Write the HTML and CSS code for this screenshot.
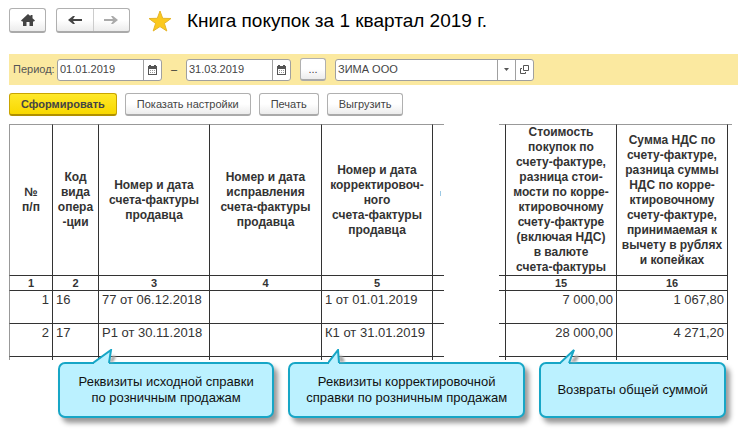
FILE: index.html
```html
<!DOCTYPE html>
<html lang="ru">
<head>
<meta charset="utf-8">
<title>Книга покупок</title>
<link rel="stylesheet" href="styles.css">
</head>
<body>
<header class="topbar">
  <button class="btn home" type="button" aria-label="Домой">
    <svg width="14" height="12" viewBox="0 0 14 12"><path fill="#444" d="M7 0 0 6.500 1 7.500h1V12h3.500V8h3v4H12V7.500h1l1-1-2.500-2.300V1H9.500v1.300z"/></svg>
  </button>
  <div class="nav">
    <button type="button" aria-label="Назад">
      <svg width="14" height="10" viewBox="0 0 14 10"><path fill="#444" d="M14 4H5l2-3H5L0 5l5 4h2L5 6h9z"/></svg>
    </button>
    <button type="button" aria-label="Вперёд">
      <svg width="14" height="10" viewBox="0 0 14 10"><path fill="#aaa" d="M0 4h9L7 1h2l5 4-5 4H7l2-3H0z"/></svg>
    </button>
  </div>
  <svg class="star" width="24" height="22" viewBox="0 0 24 22"><path fill="#fbc91e" stroke="#e5b52a" stroke-width="1" d="M12 1l2.700 7.300 8.300.2-6.600 4.900 2.400 7.600L12 16.600 5.200 21l2.400-7.600L1 8.500l8.300-.2z"/></svg>
  <h1>Книга покупок за 1 квартал 2019 г.</h1>
</header>

<form class="period">
  <label for="from">Период:</label>
  <div class="field date">
    <input id="from" type="text" value="01.01.2019">
    <button type="button" aria-label="Выбрать дату начала"><svg width="9" height="10" viewBox="0 0 9 10"><path fill="#555" d="M0 1h1V0h2v1h3V0h2v1h1v9H0z"/><path fill="#fff" d="M1 4h7v5H1z"/><path stroke="#999" stroke-dasharray="1 1" d="M2 5.500h5M2 7.500h5"/></svg></button>
  </div>
  <span class="dash">–</span>
  <div class="field date">
    <input type="text" value="31.03.2019" aria-label="Конец периода">
    <button type="button" aria-label="Выбрать дату конца"><svg width="9" height="10" viewBox="0 0 9 10"><path fill="#555" d="M0 1h1V0h2v1h3V0h2v1h1v9H0z"/><path fill="#fff" d="M1 4h7v5H1z"/><path stroke="#999" stroke-dasharray="1 1" d="M2 5.500h5M2 7.500h5"/></svg></button>
  </div>
  <button class="btn more" type="button">...</button>
  <div class="field org">
    <input type="text" value="ЗИМА ООО" aria-label="Организация">
    <button type="button" aria-label="Открыть список"><svg width="5" height="3" viewBox="0 0 5 3"><path fill="#555" d="M0 0h5L2.500 3z"/></svg></button>
    <button type="button" aria-label="Открыть карточку"><svg width="9" height="9" viewBox="0 0 9 9"><path fill="none" stroke="#555" d="M3.500.5h5v5h-5zM2 3.500H.5v5h5V7"/></svg></button>
  </div>
</form>

<div class="actions">
  <button class="btn primary" type="button">Сформировать</button>
  <button class="btn" type="button">Показать настройки</button>
  <button class="btn" type="button">Печать</button>
  <button class="btn" type="button">Выгрузить</button>
</div>

<main class="report">
<table>
  <colgroup>
    <col class="c-num"><col class="c-code"><col class="c-wide"><col class="c-mid"><col class="c-wide"><col class="c-cut"><col><col class="c-pre"><col class="c-wide"><col class="c-wide"><col class="c-end">
  </colgroup>
  <thead>
    <tr class="titles">
      <th>№<br>п/п</th>
      <th>Код<br>вида<br>опера<br>-ции</th>
      <th>Номер и дата<br>счета-фактуры<br>продавца</th>
      <th>Номер и дата<br>исправления<br>счета-фактуры<br>продавца</th>
      <th>Номер и дата<br>корректировоч-<br>ного<br>счета-фактуры<br>продавца</th>
      <th class="open"><i class="mark"></i></th>
      <th class="gap"></th>
      <th></th>
      <th>Стоимость<br>покупок по<br>счету-фактуре,<br>разница стои-<br>мости по корре-<br>ктировочному<br>счету-фактуре<br>(включая НДС)<br>в валюте<br>счета-фактуры</th>
      <th>Сумма НДС по<br>счету-фактуре,<br>разница суммы<br>НДС по корре-<br>ктировочному<br>счету-фактуре,<br>принимаемая к<br>вычету в рублях<br>и копейках</th>
      <th class="tail"></th>
    </tr>
    <tr class="numbers">
      <th>1</th><th>2</th><th>3</th><th>4</th><th>5</th><th class="open"></th><th class="gap"></th><th></th><th>15</th><th>16</th><th class="tail"></th>
    </tr>
  </thead>
  <tbody>
    <tr>
      <td class="right">1</td><td>16</td><td>77 от 06.12.2018</td><td></td><td>1 от 01.01.2019</td><td class="open"></td><td class="gap"></td><td></td><td class="right">7 000,00</td><td class="right">1 067,80</td><td class="tail"></td>
    </tr>
    <tr>
      <td class="right">2</td><td>17</td><td>Р1 от 30.11.2018</td><td></td><td>К1 от 31.01.2019</td><td class="open"></td><td class="gap"></td><td></td><td class="right">28 000,00</td><td class="right">4 271,20</td><td class="tail"></td>
    </tr>
    <tr class="stub">
      <td></td><td></td><td></td><td></td><td></td><td class="open"></td><td class="gap"></td><td></td><td></td><td></td><td class="tail"></td>
    </tr>
  </tbody>
</table>
</main>

<section class="notes">
  <div class="note source">
    <svg class="pointer" width="26" height="15" viewBox="0 0 26 15"><path class="shade" d="M16 13 20 6l3 2-3 5z"/><path class="fill" d="M1 15v-2L18 1l-2 12v2z"/><path class="edge" d="M0 14 18 1l-2 13"/></svg>
    Реквизиты исходной справки<br>по розничным продажам
  </div>
  <div class="note correction">
    <svg class="pointer" width="26" height="15" viewBox="0 0 26 15"><path class="shade" d="M11 13V6l4 2 2 5z"/><path class="fill" d="M1 15v-2l9-12 1 12v2z"/><path class="edge" d="M0 14 10 1l1 13"/></svg>
    Реквизиты корректировочной<br>справки по розничным продажам
  </div>
  <div class="note refund">
    <svg class="pointer" width="26" height="15" viewBox="0 0 26 15"><path class="shade" d="M10 13 16 6l3 2-3 5z"/><path class="fill" d="M1 15v-2L14 1 9 13v2z"/><path class="edge" d="M0 14 14 1 9 14"/></svg>
    Возвраты общей суммой
  </div>
</section>
</body>
</html>
```
FILE: styles.css
```css
* { box-sizing: border-box; }
body {
  margin: 0;
  background: #fff;
  color: #333;
  font: 11px/15px "Liberation Sans", Arial, sans-serif;
}
button, input { font: inherit; color: #444; margin: 0; }
svg { display: block; flex: none; }

.btn {
  display: flex;
  align-items: center;
  justify-content: center;
  height: 23px;
  padding: 0 11px;
  border: 1px solid #b0b0b0;
  border-bottom: 2px solid #aaa;
  border-radius: 3px;
  background: linear-gradient(#fff 50%, #ececec);
  white-space: nowrap;
}

.topbar {
  display: flex;
  align-items: center;
  height: 38px;
  margin: 0 0 16px 9px;
  padding-top: 3px;
}
.home { width: 37px; height: 25px; padding: 0; }
.nav {
  display: flex;
  width: 74px;
  height: 25px;
  margin-left: 10px;
  border: 1px solid #b0b0b0;
  border-bottom: 2px solid #aaa;
  border-radius: 3px;
  background: linear-gradient(#fff 50%, #ececec);
}
.nav button {
  display: flex;
  flex: 1;
  align-items: center;
  justify-content: center;
  padding: 0;
  border: 0;
  background: none;
}
.nav button + button { border-left: 1px solid #ccc; }
.star { margin: 0 15px 0 18px; }
h1 { margin: 0; color: #000; font-size: 19px; line-height: 24px; font-weight: 400; white-space: nowrap; }

.period {
  display: flex;
  align-items: center;
  height: 31px;
  margin-left: 9px;
  padding-left: 4px;
  background: #fbe9a0;
}
.period label { width: 44px; color: #555; }
.field {
  display: flex;
  height: 22px;
  border: 1px solid #a0a0a0;
  border-radius: 3px;
  background: #fff;
  overflow: hidden;
}
.date { width: 105px; }
.org { width: 199px; }
.field input { flex: 1; min-width: 0; padding: 0 2px; border: 0; background: none; outline: 0; }
.field button {
  display: flex;
  flex: none;
  align-items: center;
  justify-content: center;
  width: 18px;
  padding: 0;
  border: 0;
  border-left: 1px solid #a0a0a0;
  background: none;
}
.dash { width: 24px; text-align: center; }
.more { width: 26px; margin: 0 9px; padding: 0; }

.actions { display: flex; gap: 8px; margin: 8px 9px 8px; }
.primary {
  border-color: #c9a400;
  border-bottom-color: #b09000;
  background: linear-gradient(#ffe82a, #f8d800);
  font-weight: 700;
}

.report { margin: 0 6px 0 9px; }
table { width: 100%; table-layout: fixed; border-collapse: separate; border-spacing: 0; font-size: 13px; }
.c-num { width: 44px; }
.c-code { width: 46px; }
.c-wide { width: 111px; }
.c-mid { width: 112px; }
.c-cut { width: 11px; }
.c-pre { width: 7px; }
.c-end { width: 4px; }
th, td { padding: 0; border-right: 1px solid #333; border-bottom: 1px solid #333; white-space: nowrap; }
th:first-child, td:first-child { border-left: 1px solid #999; }
.titles th { height: 152px; border-top: 1px solid #999; font-size: 12px; }
.numbers th { height: 15px; font-size: 11px; line-height: 14px; }
td { height: 33px; padding: 1px 3px 0; vertical-align: top; }
.right { text-align: right; }
.open { border-right: 0; padding: 0; }
.titles .gap, .gap { border: 0; padding: 0; }
.tail { border-right: 0; border-bottom: 0; padding: 0; }
.stub td { height: 3px; border-bottom: 0; padding: 0; }
.mark { display: block; width: 1px; height: 5px; margin: 0 0 14px 7px; background: #9cc9e4; }

.notes {
  display: flex;
  align-items: flex-start;
  gap: 14px;
  margin: 2px 12px 12px 58px;
  color: #111;
  font-size: 13px;
  line-height: 16px;
}
.note {
  position: relative;
  display: flex;
  align-items: center;
  justify-content: center;
  height: 56px;
  border: 2px solid #17a6c6;
  border-radius: 7px;
  background: #bbf1ff;
  box-shadow: 4px 5px 5px #999;
  text-align: center;
  white-space: nowrap;
}
.source { flex: 217 1 0; }
.correction { flex: 238 1 0; }
.refund { flex: 187 1 0; }
.pointer { position: absolute; bottom: 100%; }
.source .pointer { left: 33px; }
.correction .pointer { left: 38px; }
.refund .pointer { left: 19px; }
.shade { fill: #aaa; filter: blur(1px); }
.fill { fill: #bbf1ff; }
.edge { fill: none; stroke: #17a6c6; stroke-width: 2px; }
```
